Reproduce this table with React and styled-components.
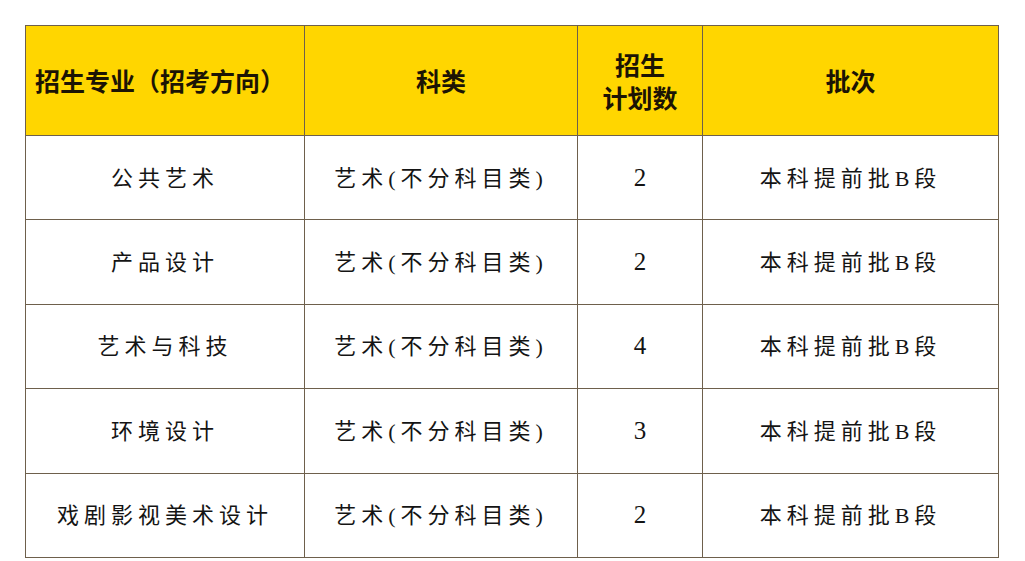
import React from "react";
import styled, { createGlobalStyle } from "styled-components";

const rows = [
  { major: "公共艺术", kind: "艺术(不分科目类)", plan: 2, batch: "本科提前批B段" },
  { major: "产品设计", kind: "艺术(不分科目类)", plan: 2, batch: "本科提前批B段" },
  { major: "艺术与科技", kind: "艺术(不分科目类)", plan: 4, batch: "本科提前批B段" },
  { major: "环境设计", kind: "艺术(不分科目类)", plan: 3, batch: "本科提前批B段" },
  { major: "戏剧影视美术设计", kind: "艺术(不分科目类)", plan: 2, batch: "本科提前批B段" },
];

const App = () => (
  <Page>
    <GlobalStyle />
    <Table>
      <colgroup>
        <col style={{ width: 279 }} />
        <col style={{ width: 273 }} />
        <col style={{ width: 125 }} />
        <col style={{ width: 296 }} />
      </colgroup>
      <thead>
        <tr>
          <Th $shift={10}>招生专业（招考方向）</Th>
          <Th>科类</Th>
          <Th>
            招生
            <br />
            计划数
          </Th>
          <Th>批次</Th>
        </tr>
      </thead>
      <tbody>
        {rows.map((r) => (
          <tr key={r.major}>
            <Td>{r.major}</Td>
            <Td>{r.kind}</Td>
            <Td $number>{r.plan}</Td>
            <Td>{r.batch}</Td>
          </tr>
        ))}
      </tbody>
    </Table>
  </Page>
);

export default App;

const GlobalStyle = createGlobalStyle`
  body {
    margin: 0;
    background: #ffffff;
  }
`;

const Page = styled.div`
  width: 1025px;
  height: 561px;
  padding: 25px 0 0 25px;
  box-sizing: border-box;
`;

const Table = styled.table`
  width: 973px;
  table-layout: fixed;
  border-collapse: collapse;
  border: 1.5px solid #6e604c;
`;

const Th = styled.th`
  height: 109px;
  padding: 0 ${(p) => p.$shift || 0}px 0 0;
  background: #ffd600;
  border: 1.5px solid #6e604c;
  color: #1c1404;
  font-family: "Noto Sans CJK SC", sans-serif;
  font-weight: 700;
  font-size: 25px;
  line-height: 33px;
  text-align: center;
  vertical-align: middle;
`;

const Td = styled.td`
  height: 79.4px;
  padding: ${(p) => (p.$number ? "2px 0 2px" : "0 0 4px")};
  border: 1.5px solid #6e604c;
  color: #141414;
  font-family: "Liberation Serif", "Noto Sans CJK SC", serif;
  font-weight: 400;
  font-size: ${(p) => (p.$number ? 25 : 22)}px;
  letter-spacing: ${(p) => (p.$number ? 0 : 5)}px;
  text-align: center;
  vertical-align: middle;
`;
